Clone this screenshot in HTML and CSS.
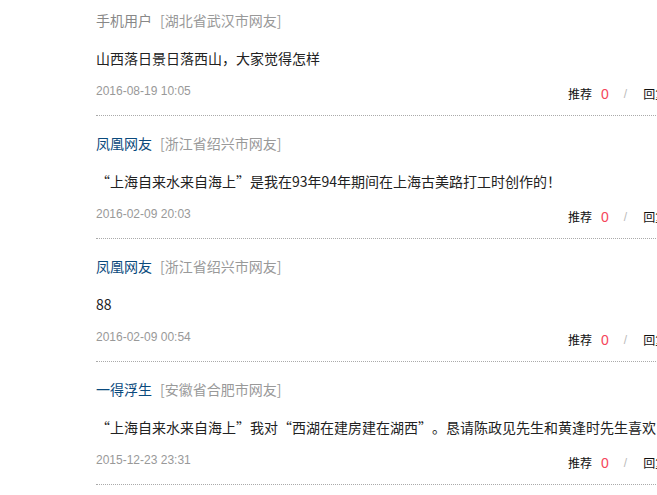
FILE: index.html
```html
<!DOCTYPE html>
<html lang="zh">
<head>
<meta charset="utf-8">
<title>评论</title>
<link rel="stylesheet" href="styles.css">
</head>
<body>
<ul class="comments">
  <li class="item">
    <div class="user"><span class="name">手机用户</span><span class="loc">[湖北省武汉市网友]</span></div>
    <p class="text">山西落日景日落西山，大家觉得怎样</p>
    <div class="foot"><span class="date">2016-08-19 10:05</span><span class="acts"><span class="rec">推荐</span><span class="num">0</span><span class="sep">/</span><span class="reply">回复</span></span></div>
  </li>
  <li class="item">
    <div class="user"><a class="name link">凤凰网友</a><span class="loc">[浙江省绍兴市网友]</span></div>
    <p class="text">“上海自来水来自海上”是我在93年94年期间在上海古美路打工时创作的！</p>
    <div class="foot"><span class="date">2016-02-09 20:03</span><span class="acts"><span class="rec">推荐</span><span class="num">0</span><span class="sep">/</span><span class="reply">回复</span></span></div>
  </li>
  <li class="item">
    <div class="user"><a class="name link">凤凰网友</a><span class="loc">[浙江省绍兴市网友]</span></div>
    <p class="text">88</p>
    <div class="foot"><span class="date">2016-02-09 00:54</span><span class="acts"><span class="rec">推荐</span><span class="num">0</span><span class="sep">/</span><span class="reply">回复</span></span></div>
  </li>
  <li class="item">
    <div class="user"><a class="name link">一得浮生</a><span class="loc">[安徽省合肥市网友]</span></div>
    <p class="text">“上海自来水来自海上”我对“西湖在建房建在湖西”。恳请陈政见先生和黄逢时先生喜欢</p>
    <div class="foot"><span class="date">2015-12-23 23:31</span><span class="acts"><span class="rec">推荐</span><span class="num">0</span><span class="sep">/</span><span class="reply">回复</span></span></div>
  </li>
</ul>
</body>
</html>
```

FILE: styles.css
```css
html, body {
  margin: 0;
  padding: 0;
  overflow: hidden;
  background: #fff;
}
body {
  font-family: "Noto Sans CJK SC", "Liberation Sans", sans-serif;
  font-size: 14px;
  color: #222;
}
.comments {
  list-style: none;
  margin: -7px 0 0 96px;
  padding: 0;
  width: 640px;
}
.item {
  padding: 15px 0 11px;
  border-bottom: 1px dotted #aaa;
}
.user {
  display: flex;
  gap: 8px;
  line-height: 24px;
  height: 24px;
  font-size: 14px;
  white-space: nowrap;
}
.name { color: #888; text-decoration: none; }
.name.link { color: #0b4a7d; }
.loc { color: #999; }
.text {
  margin: 14px 0 0;
  line-height: 24px;
  height: 24px;
  font-size: 14px;
  color: #222;
  white-space: nowrap;
  text-spacing-trim: space-all;
}
.foot {
  display: grid;
  grid-template-columns: 472px auto;
  align-items: start;
  margin-top: 11px;
}
.date {
  font-family: "Liberation Sans", sans-serif;
  font-size: 12px;
  line-height: 20px;
  color: #999;
}
.acts {
  display: flex;
  align-items: center;
  padding-top: 3px;
  line-height: 20px;
  font-size: 12px;
  color: #111;
  white-space: nowrap;
}
.num {
  font-family: "Liberation Sans", sans-serif;
  font-size: 14px;
  color: #f5465a;
  margin-left: 9px;
}
.sep {
  font-family: "Liberation Sans", sans-serif;
  font-size: 12px;
  color: #bbb;
  margin-left: 15px;
}
.reply {
  margin-left: 16px;
}
```
